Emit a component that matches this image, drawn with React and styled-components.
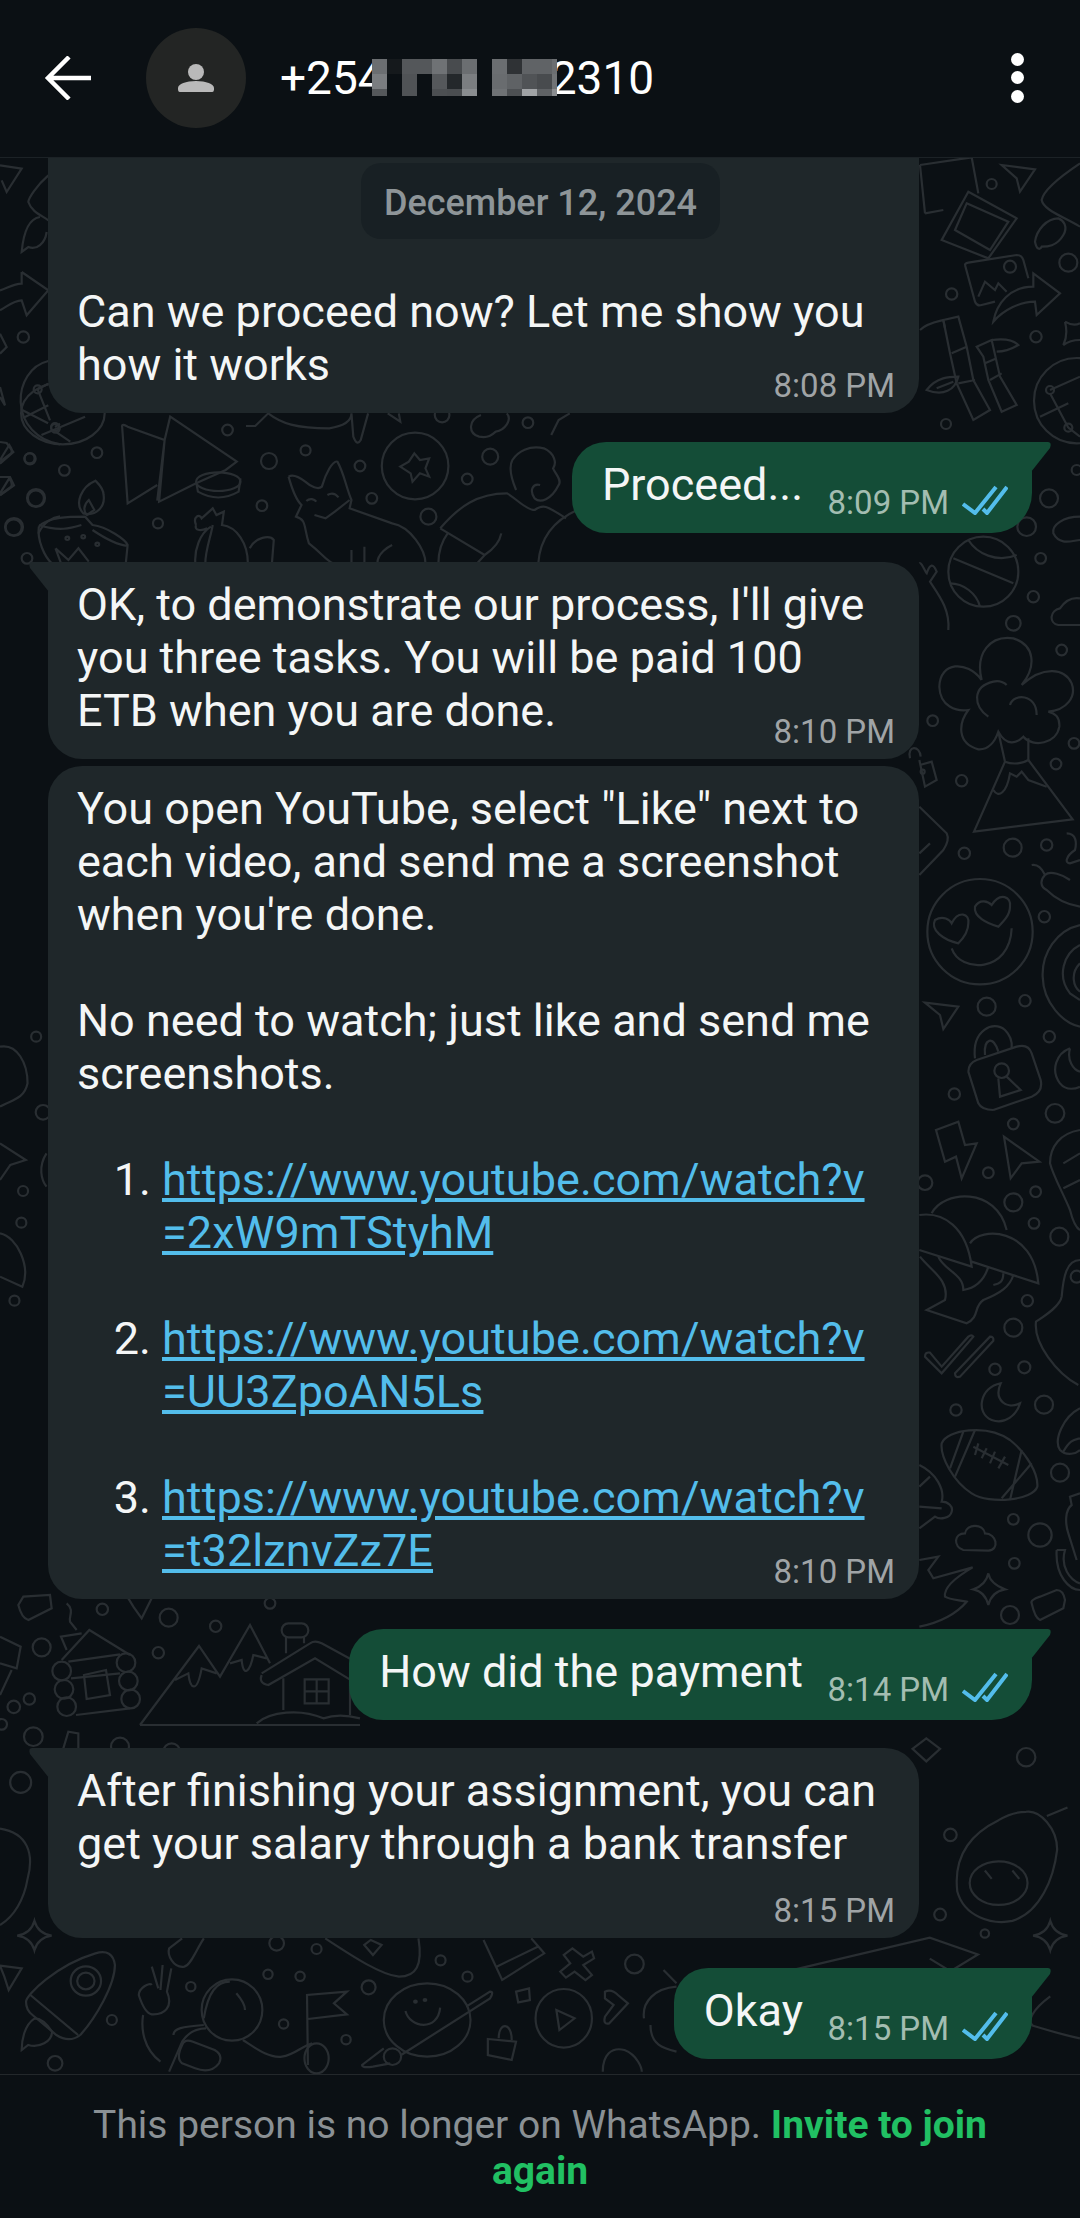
import React from 'react';
import styled, { createGlobalStyle } from 'styled-components';

const Global = createGlobalStyle`
  html, body { margin: 0; padding: 0; background: #0b1014; }
  * { box-sizing: border-box; }
`;

const el = (cx, cy, rx, ry) =>
  `M${cx - rx} ${cy}a${rx} ${ry} 0 1 0 ${2 * rx} 0a${rx} ${ry} 0 1 0 ${-2 * rx} 0Z`;

// wallpaper doodles, each group is traced in its own crop coordinates
const doodles = [
  {
    at: [900, 150, 3, 3],
    dots: [[275,102,15],[505,338,27],[155,432,17],[408,560,17],[138,822,15],[530,960,15],[447,1045,27],[380,1130,28],[422,1225,16],[400,1340,17],[340,1420,22],[450,720,12],[505,833,12]],
    paths: [
      'M60 45L215 22L235 130M75 190L60 45M75 190L130 180',
      'M205 125L350 205L265 325L125 270Z','M200 160L325 215L270 300L165 240Z',
      'M305 45L405 58L360 125L350 85Z',
      'M540 40C480 80 430 120 425 150C430 180 490 200 540 230',
      'M475 205C440 205 410 240 405 275C410 300 420 300 425 290C440 290 470 290 490 255C505 230 490 210 475 205Z',
      'M195 345Q195 340 205 338L350 315Q365 315 370 330L385 385M195 345L225 455Q230 470 245 465L285 455','M235 440L255 395L285 420L295 400L320 425',
      el(330,350,18,18),
      'M400 370L480 430L410 495L405 455C360 455 310 480 280 515C290 460 330 410 400 410Z',
      'M130 510L175 500L200 590L220 690L270 780L220 810L170 700L150 610ZM155 610L200 590M175 700L225 690',
      'M60 540C80 520 110 515 130 510L135 535','M80 720C110 680 150 680 175 680C165 720 130 740 80 720ZM110 715L160 695',
      'M230 590L275 570L300 680L350 765L305 785L265 690L250 620ZM255 640L290 625M270 690L305 670',
      'M275 570C310 565 340 570 355 585C330 600 310 605 290 605',
      'M495 515Q520 530 540 520M540 570Q510 570 490 585Q505 555 495 515',
      el(530,752,128,128),'M450 720L540 680M420 800L505 760M450 730L505 833M505 833L540 860',
      'M540 1100C490 1100 455 1125 460 1150C480 1190 520 1170 540 1170',
      el(250,1265,105,105),'M160 1225L340 1300M205 1170C230 1210 290 1240 350 1215M150 1300C190 1300 230 1330 240 1370',
      'M540 1345C510 1340 490 1360 480 1375C450 1380 445 1420 475 1425L540 1425',
      'M58 1240C65 1235 75 1265 80 1270C90 1240 100 1240 110 1265L90 1295C120 1340 150 1380 145 1440',
    ],
  },
  {
    at: [900, 630, 3, 3],
    dots: [[485,60,16],[98,272,16],[522,340,16],[468,402,16],[185,452,17],[193,670,17],[338,653,27],[440,645,17],[433,860,17],[260,1130,27],[375,1112,17],[448,1220,17],[163,1392,17]],
    paths: [
      'M245 150C200 90 120 95 118 170C120 230 170 245 205 240C175 280 170 340 235 358C265 360 285 335 295 305C320 350 350 340 370 320C400 355 470 340 478 290C480 260 465 250 445 245C500 240 530 200 515 160C495 115 430 105 365 165C410 110 405 45 340 25C270 15 225 70 245 150',
      'M265 260C220 230 215 170 280 155C300 150 315 160 320 165','M330 225C340 190 410 190 410 255',
      'M295 305L315 395M385 325L385 390M315 395C340 405 370 400 385 390',
      'M315 395L222 605L518 568L385 390','M280 480C295 505 320 490 330 430L350 440L365 425L385 450L440 470',
      'M58 390L75 470L110 450L95 395L60 405','M30 385C20 345 60 345 62 380',el(68,425,6,6),
      'M58 530L140 610Q150 630 130 660L58 735M58 670L90 640',
      'M395 705C420 700 430 725 435 735C420 750 420 770 440 780C470 810 510 825 540 830M435 735C450 720 490 735 510 750',
      'M500 610C530 610 530 640 525 660C495 680 495 700 510 700L540 690',
      el(240,905,158,158),
      'M175 940C130 930 90 900 105 870C130 855 150 870 155 880C175 840 210 850 205 880C205 905 190 925 175 940Z',
      'M295 890C260 880 220 860 225 830C240 805 265 815 275 825C300 785 335 800 330 830C330 855 310 875 295 890Z',
      'M155 955C180 1030 330 1030 335 895',
      'M540 885C470 900 425 970 428 1040C430 1120 490 1180 540 1190M540 945C490 970 470 1040 510 1090L540 1110M540 1000C510 1030 520 1070 540 1085',
      'M75 1118L175 1130L130 1197L120 1155Z',
      'M205 1325Q205 1300 230 1290L350 1250Q385 1240 395 1270L422 1350Q430 1385 395 1400L280 1440M205 1325L235 1420Q245 1440 280 1440',
      'M225 1285C215 1200 280 1170 315 1200C340 1225 335 1250 335 1255M255 1275C250 1225 280 1215 295 1265',
      el(305,1322,22,22),'M295 1345L300 1400L362 1380L320 1340',
      'M510 1255C470 1270 450 1320 480 1360C500 1385 530 1375 540 1370M510 1255C500 1290 520 1320 540 1325',
    ],
  },
  {
    at: [900, 1110, 3, 3],
    dots: [[340,42,16],[465,10,28],[265,188,16],[340,277,27],[407,245,16],[402,340,16],[478,380,27],[75,218,22],[382,572,17],[340,653,27],[530,500,18],[285,778,17],[373,772,18],[432,884,27],[168,900,17],[480,1088,27],[340,1228,16],[420,1275,35],[343,1360,16],[330,1515,27]],
    paths: [
      'M108 60L175 35L195 105L230 100L185 205L168 140L135 155Z',
      'M312 80L418 155L365 160L332 205Z',
      'M540 60C480 70 450 110 450 160C460 200 490 250 510 300C520 340 530 355 540 360M490 160L540 130M490 235L540 210',
      'M58 315C130 305 200 350 215 470L58 420M95 310C130 240 290 230 320 360M210 400C240 350 400 350 415 520L215 455',
      'M115 440C130 480 190 490 190 540C220 535 250 520 265 470M60 440C90 480 150 510 135 570L80 600L200 640C240 620 220 590 250 570C300 550 330 530 340 495M280 525C300 520 310 515 310 490',
      'M540 450C500 450 490 500 485 560C480 590 430 620 408 635C400 700 470 790 535 825',
      'M75 740L125 790L220 680Q215 672 205 680L125 770L90 728Q75 725 75 740ZM165 790L270 680Q282 680 280 692L180 800Q165 805 165 790Z',
      'M302 820C240 830 225 910 275 930C315 945 350 915 360 880C320 900 280 870 302 820Z',
      'M125 1000C140 960 260 940 330 990C380 1030 415 1090 412 1130C400 1170 270 1185 215 1150C160 1115 120 1040 125 1000Z',
      'M190 965L150 1075M225 960L165 1100M395 1060L305 1165M365 1020L330 1170',
      'M220 1010L325 1065M235 1000L225 1035M260 1015L245 1045M285 1025L270 1060M315 1040L295 1075',
      'M540 895C490 920 460 990 480 1020C500 1040 530 1030 540 1020M490 1025C510 990 520 990 540 985',
      'M540 1150L510 1160L515 1185C495 1200 495 1240 505 1270L530 1350',
      'M470 1320L495 1320C480 1370 510 1410 540 1420M470 1320C465 1400 510 1440 540 1440',
      'M58 1065C110 1090 135 1140 125 1175C145 1175 160 1190 155 1205C150 1225 120 1230 105 1220L58 1255M58 1130L90 1100M58 1190L125 1195',
      'M190 1320C160 1310 160 1270 195 1270C200 1240 250 1240 255 1270C290 1270 300 1320 265 1322Z',
      'M265 1390Q270 1420 315 1438Q275 1445 265 1485Q255 1445 220 1438Q258 1425 265 1390Z',
      'M58 1350L115 1340L85 1380L100 1405L218 1372C170 1400 130 1430 135 1460C150 1470 180 1470 200 1475C170 1510 130 1535 58 1550',
      'M395 1480Q390 1470 420 1460L470 1440Q490 1440 495 1470L490 1495L420 1530Q405 1525 395 1480Z',
    ],
  },
  {
    at: [0, 1935, 2.306, 3],
    dots: [[258,255,15],[127,385,22],[440,155,14],[618,118,14],[692,124,14],[850,157,21],[654,267,14],[798,314,14],[1078,125,15],[1016,76,15],[730,42,15],[638,25,22],[1463,87,28]],
    paths: [
      'M60 200C60 180 130 90 220 55Q260 40 265 90C265 150 220 250 185 300Q160 325 130 300L75 240Q60 225 60 200ZM70 180L180 300',
      el(198,138,35,44),el(198,138,20,25),
      'M80 250C55 270 50 320 50 345L65 330C90 340 120 320 120 290C110 270 95 250 80 250Z',
      'M0 92L50 100L20 165L10 125Z',
      'M330 240C325 280 330 340 370 380M350 95L365 160M375 90L370 165M395 100L385 170C400 215 380 240 350 238C335 235 325 200 320 180C320 160 345 140 350 150',
      el(535,225,70,92),'M470 250C480 170 500 140 530 140M545 175C555 190 565 210 565 225',
      'M400 300C400 280 420 275 470 270M390 410L420 320C440 280 470 280 475 280',
      'M420 330Q425 310 445 320L495 345Q515 360 505 385C490 410 470 410 450 400L420 385Q405 370 420 330Z',
      'M560 315C590 340 620 370 650 365C680 360 700 330 720 325',el(730,370,28,45),
      'M710 390L708 180L800 170L770 205L800 238L710 252',
      el(985,255,100,110),'M935 228C945 280 1010 290 1015 218',el(958,200,3,3),el(980,195,3,3),
      'M1075 215L1130 170Q1140 170 1130 190L925 360M885 340L835 390Q835 400 860 395L900 385',el(905,365,20,25),
      'M1125 312L1190 320L1180 375L1125 360Z','M1150 310C1150 260 1180 260 1180 315',
      el(1300,250,65,88),'M1283 225L1325 250L1290 285Z','M1190 170L1220 160L1222 195L1195 202Z',
      'M1395 170Q1410 160 1425 180L1448 205L1405 265Q1390 270 1395 245L1415 210L1395 190Z',
      'M470 10C450 50 440 90 425 95C400 100 385 60 390 40L420 10',
      'M750 10C820 70 880 120 920 125C960 125 975 90 965 10','M840 30L860 60L880 30L855 15Z',
      'M1115 15L1158 135L1255 55L1225 10M1145 95L1240 35',
      'M1320 40L1345 65L1365 50L1370 70L1345 90L1365 120L1350 135L1325 110L1305 128L1292 110L1315 85L1300 60Z',
      'M1485 250C1480 200 1510 160 1560 155M1500 270C1500 330 1530 340 1560 350M1530 105L1560 145',
      'M1390 410C1390 360 1410 335 1440 345C1470 360 1480 400 1480 410',
    ],
  },
  {
    at: [0, 410, 2.703, 3],
    dots: [[80,145,15],[262,128,16],[174,181,16],[615,60,16],[97,265,24],[37,352,24],[427,340,15],[73,445,16],[708,287,16],[727,153,24],[826,121,15],[973,168,16],[1005,265,16],[1158,320,24],[1263,207,16],[1325,140,24],[1427,38,16],[150,55,13],[1195,15,22]],
    paths: [
      el(170,10,113,93),'M112 75L230 20M150 65L190 95M60 0L130 40',
      'M0 150L25 105Q35 120 30 130L0 155','M0 250L25 205Q35 220 30 230L0 255',
      'M330 48Q330 40 345 50L445 90L460 20L640 155L610 180L530 220L430 275L445 90M445 90L425 272M330 48L345 280L425 225',
      el(590,215,60,28),'M530 215L535 245Q590 280 645 245L650 205',
      'M258 212C220 230 200 280 225 310C260 320 285 290 280 255C280 235 265 220 258 212Z','M240 270C225 285 225 305 235 315L255 300Z',
      'M105 350C130 320 190 320 230 320L250 345C290 350 340 390 345 405L340 460M105 350C100 390 120 440 140 460M105 345C160 365 190 355 220 345M250 360C290 390 320 405 345 408',
      el(182,385,5,5),el(225,380,5,5),el(263,403,5,5),'M150 415L165 460M150 415L185 450L212 415L240 455',
      'M530 345C520 320 540 310 545 325L575 295L585 315L605 305L600 345C640 350 670 400 670 460M530 345C525 360 540 365 560 355M528 460C525 420 540 370 570 350M555 460C555 420 570 380 575 345',
      'M675 415C690 380 730 375 740 390L735 460',
      'M780 200Q795 190 825 215C840 230 860 240 870 230C880 190 900 150 912 155C930 190 935 230 950 270L945 295L1060 340C1110 350 1150 420 1150 460',
      'M780 200C790 240 800 270 815 285L800 320C830 330 820 350 835 400C870 430 880 450 900 460',
      'M850 315L880 325L905 305L945 270M828 273C838 263 850 268 855 275M885 255C900 245 910 255 915 262',
      'M1020 460C1020 430 1050 410 1060 405M985 410L985 460M950 420L950 460',
      el(1122,168,90,100),'M1120 130L1135 150L1160 145L1150 175L1160 200L1135 190L1115 215L1110 190L1082 170L1105 155Z',
      'M1395 240C1380 200 1375 170 1385 150C1400 125 1430 105 1470 115C1500 130 1505 160 1495 175C1500 190 1520 210 1510 225C1490 270 1460 280 1445 265C1430 240 1440 220 1460 225',
      'M1190 355C1240 290 1290 250 1370 250C1390 260 1420 300 1445 300C1470 280 1480 290 1530 325M1190 355L1310 435M1210 370C1190 400 1185 430 1185 460M1355 370C1350 400 1330 420 1310 435L1290 460',
      'M1560 300C1500 330 1460 380 1455 460',
      'M665 48L690 48L725 10C760 40 800 55 890 55C920 50 950 40 950 10L955 80Q965 110 975 90L995 10M1048 10L1082 35L1078 10',
      'M1300 15C1265 30 1265 70 1295 80C1320 85 1330 75 1340 65C1365 60 1385 30 1370 10M1490 75L1510 30L1540 10',
    ],
  },
  {
    at: [0, 1595, 3, 3],
    dots: [[307,43,17],[506,68,27],[647,94,17],[125,157,27],[475,173,17],[88,312,17],[100,425,28],[5,388,16],[810,25,16],[360,455,27],[515,470,25]],
    paths: [
      'M55 30L70 5L150 0L155 40L85 75Q65 70 55 30Z','M200 25C225 45 205 65 210 80L230 105',
      'M385 10L400 35L425 70L455 10',
      'M185 195L268 105L390 180M200 165L183 125L245 115',
      el(185,228,28,28),el(192,283,28,28),el(200,335,28,28),el(378,203,28,28),el(385,258,28,28),el(392,312,28,28),
      'M205 200L360 178M213 250L360 235M228 360L390 340','M252 240L318 225L330 300L260 312Z',
      'M420 390L597 153L660 245L750 90L810 205M525 255L565 235C570 280 590 300 605 220L650 235M690 205L725 195C730 250 750 230 760 180L800 190M420 390L1080 390',
      'M865 85H905A20 21 0 0 1 905 127H865A20 21 0 0 1 865 85ZM858 127L858 175M912 127L912 145',
      'M785 240Q775 265 805 270L945 190L1060 260M785 235L930 145Q945 135 965 145L1075 205',
      'M850 250L850 345M1050 250L1050 360M914 253H986V325H914ZM950 253V325M914 289H986',
      'M770 385C810 350 900 340 970 370C1000 360 1040 360 1080 370',
      'M0 125L62 155L50 220L0 205M35 225L0 300','M190 460L205 410L235 415L235 460',
    ],
  },
  {
    at: [0, 157, 3, 3],
    dots: [[70,540,17],[90,905,17],[108,1023,27],[42,1110,27],[113,697,12],[165,810,12]],
    paths: [
      'M0 25L65 35L20 105L5 70','M145 55C110 85 85 125 85 135C95 165 125 175 145 190',
      'M120 180C85 185 70 230 65 285L85 270C110 280 135 260 140 225',
      'M65 345L145 400L80 475L65 430C40 430 20 450 0 460M65 345L65 380C40 380 20 395 0 400',
      'M0 530L20 570L0 590M0 690L15 745L0 720',
      'M145 612C90 625 60 680 62 735C65 800 110 850 180 862M113 697L145 680M75 780L145 745M113 697L150 790M165 810L180 800',
      'M0 855L20 858L40 885L0 920M0 960L30 960L42 985L0 1015M115 1130C130 1095 160 1080 180 1078',
    ],
  },
  {
    at: [0, 1000, 2.904, 3],
    dots: [[105,110,15],[125,337,22],[67,573,15],[62,668,15],[42,902,15]],
    paths: [
      'M0 140C50 130 80 190 80 250C70 300 30 300 0 320','M0 430L75 480L30 495L0 540',
      'M135 460C110 500 120 540 135 560','M0 700C50 710 90 800 65 860L0 830',
    ],
  },
  {
    at: [0, 1560, 1.452, 2.383],
    dots: [[1380,655,15],[1365,845,14],[1430,890,10],[1490,470,22],[30,530,25],[20,350,15]],
    paths: [
      'M1450 620C1400 660 1385 720 1390 790C1400 850 1440 870 1470 860C1510 840 1530 760 1535 690C1535 640 1510 595 1490 600Q1470 600 1450 620Z',
      el(1450,770,42,52),'M1520 610L1550 590M1430 740L1440 760M1470 740L1480 760',
      'M1525 860Q1530 890 1550 895Q1530 900 1525 930Q1520 900 1500 895Q1520 890 1525 860Z',
      'M50 860Q55 890 75 895Q55 900 50 930Q45 900 25 895Q45 890 50 860Z',
      'M1345 425L1365 450L1345 480L1325 450Z','M0 640C40 650 50 700 40 760C35 810 20 850 0 870',
      'M1525 1040C1500 1070 1490 1100 1500 1110C1520 1120 1540 1130 1568 1140',
      'M1130 985L1350 900L1420 940L1380 980L1350 950',
    ],
  },
];

const mosaic = [
  ['#6b6e71', '#15191c', '#54575a', '#54575a', '#6f7275', '#484b4e', '#6b6e71', null, '#6b6e71', '#2f3235', '#606366', '#606366', '#6b6e71'],
  ['#7a7d80', null, '#505356', null, '#55585b', '#24282b', '#7b7e81', null, '#696c6f', '#5f6265', '#505356', '#484b4e', '#707376'],
  ['#55585b', null, '#505356', null, '#4c4f52', '#4a4d50', '#8a8d90', null, '#6f7275', '#4d5053', '#a0a3a6', '#5f6265', '#8a8d90'],
];

const links = [
  ['https://www.youtube.com/watch?v', '=2xW9mTStyhM'],
  ['https://www.youtube.com/watch?v', '=UU3ZpoAN5Ls'],
  ['https://www.youtube.com/watch?v', '=t32lznvZz7E'],
];

function Wallpaper() {
  return (
    <WallpaperSvg viewBox="0 158 1080 1917" fill="none" stroke="#292e32" strokeWidth="2.2">
      {doodles.map((d, i) => {
        const [x, y, sx, sy] = d.at;
        return (
          <g key={i}>
            {d.dots.map((c, j) => (
              <circle key={j} cx={x + c[0] / sx} cy={y + c[1] / sy} r={c[2] / sy} />
            ))}
            <g transform={`translate(${x} ${y}) scale(${1 / sx} ${1 / sy})`}>
              {d.paths.map((p, j) => (
                <path key={j} d={p} />
              ))}
            </g>
          </g>
        );
      })}
    </WallpaperSvg>
  );
}

function Mosaic() {
  return (
    <MosaicSvg viewBox="0 0 185 37">
      {mosaic.map((row, r) =>
        row.map((c, i) => (c ? <rect key={`${r}-${i}`} x={i * 15} y={r * 15} width={i === 12 ? 5 : 15} height={r === 2 ? 7 : 15} fill={c} /> : null)),
      )}
    </MosaicSvg>
  );
}

const Check = () => (
  <TickIcon viewBox="0 0 46 30" fill="none" stroke="#53bdeb" strokeWidth="4">
    <path d="M1 19l12 9L34 2" />
    <path d="M21 24l4 4L45 2" />
  </TickIcon>
);

function Time({ children, out }) {
  return (
    <Stamp $out={out}>
      {children}
      {out && <Check />}
    </Stamp>
  );
}

export default function App() {
  return (
    <Screen>
      <Global />
      <Header>
        <BackIcon viewBox="0 0 48 44" fill="none" stroke="#fff" strokeWidth="4.5">
          <path d="M47 22H4M25 1L4 22l21 21" />
        </BackIcon>
        <Avatar>
          <svg width="36" height="28" viewBox="0 0 36 28" fill="#b9b9b9">
            <circle cx="18" cy="8" r="8" />
            <path d="M2 28c-2 0-2-2-2-4 0-4 8-7 18-7s18 3 18 7c0 2 0 4-2 4z" />
          </svg>
        </Avatar>
        <Phone>
          +254
          <Mosaic />
          2310
        </Phone>
        <Dots>
          <i />
          <i />
          <i />
        </Dots>
      </Header>
      <Chat>
        <Wallpaper />
        <DatePill>December 12, 2024</DatePill>
        <Bubble $clipped>
          <Text>Can we proceed now? Let me show you{'\n'}how it works</Text>
          <Time>8:08 PM</Time>
        </Bubble>
        <OutBubble $mt={29}>
          <Text>Proceed...</Text>
          <Time out>8:09 PM</Time>
        </OutBubble>
        <Bubble $tail $mt={29}>
          <Text>OK, to demonstrate our process, I'll give{'\n'}you three tasks. You will be paid 100{'\n'}ETB when you are done.</Text>
          <Time>8:10 PM</Time>
        </Bubble>
        <Bubble $mt={7}>
          <Text>You open YouTube, select "Like" next to{'\n'}each video, and send me a screenshot{'\n'}when you're done.{'\n\n'}No need to watch; just like and send me{'\n'}screenshots.</Text>
          <Links>
            {links.map((l, i) => (
              <li key={i}>
                <a href="#">{l[0]}<br />{l[1]}</a>
              </li>
            ))}
          </Links>
          <Time>8:10 PM</Time>
        </Bubble>
        <OutBubble $mt={30}>
          <Text>How did the payment</Text>
          <Time out>8:14 PM</Time>
        </OutBubble>
        <Bubble $tail $mt={28} $pb={68}>
          <Text>After finishing your assignment, you can{'\n'}get your salary through a bank transfer</Text>
          <Time>8:15 PM</Time>
        </Bubble>
        <OutBubble $mt={30}>
          <Text>Okay</Text>
          <Time out>8:15 PM</Time>
        </OutBubble>
      </Chat>
      <Footer>
        This person is no longer on WhatsApp. <b>Invite to join</b>
        <br />
        <b>again</b>
      </Footer>
    </Screen>
  );
}

const Screen = styled.div`
  width: 1080px;
  height: 2218px;
  display: flex;
  flex-direction: column;
  overflow: hidden;
  background: #0b1014;
  font-family: Roboto, sans-serif;
`;

const Header = styled.header`
  height: 158px;
  flex: none;
  display: flex;
  align-items: center;
  padding: 0 56px 2px 44px;
  border-bottom: 1px solid #1c2226;
`;

const BackIcon = styled.svg`
  width: 48px;
  height: 44px;
  flex: none;
`;

const Avatar = styled.div`
  width: 100px;
  height: 100px;
  flex: none;
  margin-left: 54px;
  border-radius: 50%;
  background: #232524;
  display: flex;
  align-items: center;
  justify-content: center;
`;

const Phone = styled.div`
  margin-left: 34px;
  font-size: 46px;
  color: #fff;
  display: flex;
  align-items: center;
`;

const MosaicSvg = styled.svg`
  position: relative;
  width: 185px;
  height: 37px;
  margin: 0 -6px 0 -12px;
`;

const Dots = styled.div`
  margin-left: auto;
  display: flex;
  flex-direction: column;
  gap: 5.5px;
  i {
    display: block;
    width: 13px;
    height: 13px;
    border-radius: 50%;
    background: #fff;
  }
`;

const Chat = styled.main`
  position: relative;
  flex: 1;
  overflow: hidden;
  display: flex;
  flex-direction: column;
  align-items: flex-start;
`;

const WallpaperSvg = styled.svg`
  position: absolute;
  left: 0;
  top: 0;
  width: 1080px;
  height: 1917px;
  path {
    vector-effect: non-scaling-stroke;
  }
`;

const DatePill = styled.div`
  position: absolute;
  z-index: 2;
  left: 361px;
  top: 5px;
  width: 359px;
  height: 76px;
  padding-top: 3px;
  border-radius: 20px;
  background: #182024;
  color: #8e9598;
  font-size: 36px;
  font-weight: 500;
  display: flex;
  align-items: center;
  justify-content: center;
`;

const Bubble = styled.div`
  position: relative;
  z-index: 1;
  flex: none;
  width: 871px;
  margin-top: ${(p) => p.$mt || 0}px;
  margin-left: 48px;
  padding: 16px 26px ${(p) => p.$pb || 22}px 29px;
  border-radius: 34px;
  background: #1f272a;
  color: #f4f6f6;
  ${(p) =>
    p.$clipped &&
    `
    height: 255px;
    display: flex;
    flex-direction: column;
    justify-content: flex-end;
    border-radius: 0 0 34px 34px;
  `}
  ${(p) =>
    p.$tail &&
    `
    border-top-left-radius: 0;
    &::before {
      content: '';
      position: absolute;
      left: -19px;
      top: 0;
      width: 20px;
      height: 30px;
      background: #1f272a;
      clip-path: path('M3 0H20V30L1 6Q-1 0 3 0Z');
    }
  `}
`;

const OutBubble = styled.div`
  position: relative;
  z-index: 1;
  flex: none;
  align-self: flex-end;
  margin-top: ${(p) => p.$mt || 0}px;
  margin-right: 48px;
  padding: 16px 229px 22px 30px;
  border-radius: 34px 0 40px 34px;
  background: #144d37;
  color: #f4f6f6;
  &::after {
    content: '';
    position: absolute;
    right: -19px;
    top: 0;
    width: 20px;
    height: 30px;
    background: #144d37;
    clip-path: path('M17 0H0V30L19 6Q21 0 17 0Z');
  }
`;

const Text = styled.div`
  font-size: 45px;
  line-height: 53px;
  white-space: pre-wrap;
`;

const Links = styled.ol`
  margin: 53px 0 0;
  padding: 0 0 0 85px;
  font-size: 45px;
  line-height: 53px;
  li + li {
    margin-top: 53px;
  }
  a {
    color: #53bdeb;
    letter-spacing: 0.08px;
  }
`;

const Stamp = styled.div`
  position: absolute;
  right: 24px;
  bottom: ${(p) => (p.$out ? 12 : 9)}px;
  font-size: 33px;
  line-height: 36px;
  color: ${(p) => (p.$out ? '#a3bdb1' : '#a0a4a6')};
  display: flex;
  align-items: center;
  gap: 13px;
`;

const TickIcon = styled.svg`
  width: 46px;
  height: 30px;
  margin-top: -6px;
`;

const Footer = styled.footer`
  flex: none;
  height: 144px;
  border-top: 1px solid #23282b;
  padding-top: 27px;
  text-align: center;
  font-size: 39px;
  line-height: 46px;
  color: #8a9094;
  b {
    color: #21c063;
    font-weight: 700;
  }
`;
